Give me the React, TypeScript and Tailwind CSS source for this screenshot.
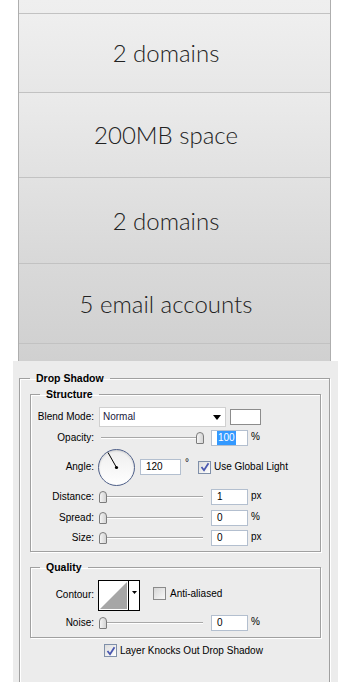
import React from "react";

const ui = { fontFamily: '"Liberation Sans", Arial, sans-serif' };
const big = { fontFamily: 'Lato, "Open Sans", sans-serif' };

function Row({ h, text, from, to, border = true }: { h: string; text?: string; from: string; to: string; border?: boolean }) {
  return (
    <div
      className={`${h} flex items-center justify-center pr-[17px] ${border ? "border-b border-[#c2c2c2]" : ""}`}
      style={{ background: `linear-gradient(${from}, ${to})` }}
    >
      {text && (
        <span className="text-[24px] font-light text-[#222222] leading-none" style={big}>
          {text}
        </span>
      )}
    </div>
  );
}

function Checkbox() {
  return (
    <div className="w-[13px] h-[13px] border border-[#7f8fa9] bg-gradient-to-br from-[#dcdcdc] to-[#ffffff] flex items-center justify-center">
      <svg width="10" height="10" viewBox="0 0 10 10">
        <path d="M1.5 5 L4 8.2 L8.5 1.2" fill="none" stroke="#4a58b0" strokeWidth="1.8" />
      </svg>
    </div>
  );
}

function EmptyCheckbox() {
  return <div className="w-[13px] h-[13px] border border-[#8a8a8a] bg-gradient-to-br from-[#d6d6d6] to-[#f8f8f8]" />;
}

function Slider({ pos }: { pos: number }) {
  return (
    <div className="relative w-[102px] h-[16px] flex items-center">
      <div className="w-full h-[2px] border-t border-[#a8a8a8] border-b border-b-white" />
      <div
        className="absolute top-[2px] w-[8px] h-[12px] rounded-t-[4px] rounded-b-[1px] border border-[#7c7c7c] bg-gradient-to-r from-[#f4f4f4] to-[#d4d4d4]"
        style={{ left: pos }}
      />
    </div>
  );
}

function Input({ value, selected }: { value: string; selected?: boolean }) {
  return (
    <div className="w-[37px] h-[16px] border border-[#b3bfcf] bg-white flex items-center pl-[5px] text-[10px] text-black leading-none">
      {selected ? <span className="bg-[#3399ff] text-white px-[1px] py-[2px]">{value}</span> : <span>{value}</span>}
    </div>
  );
}

function Label({ children }: { children: React.ReactNode }) {
  return <div className="w-[64px] text-right text-[10px] text-black leading-none pr-[1px]">{children}</div>;
}

function SliderRow({ label, value, unit, mt, selected, pos }: { label: string; value: string; unit: string; mt: string; selected?: boolean; pos: number }) {
  return (
    <div className={`flex items-center h-[16px] ${mt}`}>
      <Label>{label}</Label>
      <div className="ml-[6px]">
        <Slider pos={pos} />
      </div>
      <div className="ml-[8px]">
        <Input value={value} selected={selected} />
      </div>
      <span className="ml-[3px] text-[10px] leading-none text-black -mt-[3px]">{unit}</span>
    </div>
  );
}

const fs = "border border-[#a0a0a0] shadow-[inset_1px_1px_0_#ffffff,1px_1px_0_#ffffff]";
const lg = "text-[10.5px] font-bold leading-[14px] text-black";

export default function App() {
  return (
    <div className="w-[344px] h-[682px] bg-white overflow-hidden" style={ui}>
      <div className="ml-[18px] w-[313px] h-[361px] border-x border-[#aeaeae] flex flex-col">
        <Row h="h-[14px]" from="#efefef" to="#eeeeee" />
        <Row h="h-[79px]" text="2 domains" from="#efefef" to="#e7e7e7" />
        <Row h="h-[85px]" text="200MB space" from="#ebebeb" to="#e1e1e1" />
        <Row h="h-[86px]" text="2 domains" from="#e2e2e2" to="#d8d8d8" />
        <Row h="h-[80px]" text="5 email accounts" from="#d9d9d9" to="#d1d1d1" />
        <Row h="h-[17px]" from="#d2d2d2" to="#d0d0d0" border={false} />
      </div>
      <div className="ml-[13px] w-[325px] h-[321px] bg-[#ececec] pt-[10px]">
        <fieldset className={`ml-[6px] mr-[8px] h-[330px] ${fs}`}>
          <legend className={`ml-[10px] px-[6px] ${lg}`}>Drop Shadow</legend>
          <fieldset className={`mt-[2px] ml-[10px] mr-[8px] ${fs}`}>
            <legend className={`ml-[9px] px-[6px] ${lg}`}>Structure</legend>
            <div className="pt-[6px] pb-[5px]">
              <div className="flex items-center h-[20px]">
                <Label>Blend Mode:</Label>
                <div className="ml-[4px] w-[127px] h-[20px] bg-white border border-[#d0d0d0] flex items-center justify-between pl-[3px] pr-[4px]">
                  <span className="text-[10px] text-[#1a1a40] leading-none">Normal</span>
                  <svg width="8" height="5" viewBox="0 0 8 5">
                    <path d="M0 0 H8 L4 5 Z" fill="#000" />
                  </svg>
                </div>
                <div className="ml-[4px] w-[31px] h-[16px] bg-white border border-[#8c8c8c]" />
              </div>
              <SliderRow label="Opacity:" value="100" unit="%" mt="mt-[3px]" selected pos={95} />
              <div className="flex items-center h-[36px] mt-[3px]">
                <Label>Angle:</Label>
                <div className="ml-[3px] w-[37px] h-[37px] rounded-full border-[1.5px] border-[#4f6089] bg-gradient-to-b from-[#eeeeee] to-[#ffffff] relative shadow-[inset_0_1px_2px_rgba(0,0,0,0.15)]">
                  <svg width="34" height="34" viewBox="0 0 34 34" className="absolute left-0 top-0">
                    <line x1="17.5" y1="17.5" x2="9" y2="2.5" stroke="#000" strokeWidth="1" />
                    <circle cx="17.5" cy="17.5" r="1.6" fill="#000" />
                  </svg>
                </div>
                <div className="ml-[5px] w-[41px] h-[16px] border border-[#b3bfcf] bg-white flex items-center pl-[5px] text-[10px] leading-none">120</div>
                <span className="ml-[4px] text-[10px] leading-none -mt-[8px]">°</span>
                <div className="ml-[9px]">
                  <Checkbox />
                </div>
                <span className="ml-[3px] text-[10px] leading-none">Use Global Light</span>
              </div>
              <SliderRow label="Distance:" value="1" unit="px" mt="mt-[4px]" pos={-2} />
              <SliderRow label="Spread:" value="0" unit="%" mt="mt-[5px]" pos={-2} />
              <SliderRow label="Size:" value="0" unit="px" mt="mt-[4px]" pos={-2} />
            </div>
          </fieldset>
          <fieldset className={`mt-[8px] ml-[10px] mr-[8px] ${fs}`}>
            <legend className={`ml-[9px] px-[6px] ${lg}`}>Quality</legend>
            <div className="pt-[6px] pb-[6px]">
              <div className="flex items-center h-[30px]">
                <Label>Contour:</Label>
                <div className="ml-[3px] w-[42px] h-[31px] border border-black bg-white flex">
                  <svg width="29" height="29" viewBox="0 0 29 29">
                    <path d="M1 28 L28 1 L28 28 Z" fill="#a6a6a6" />
                  </svg>
                  <div className="w-[11px] h-full border-l border-black flex justify-center pt-[10px]">
                    <svg width="5" height="3" viewBox="0 0 5 3">
                      <path d="M0 0 H5 L2.5 3 Z" fill="#000" />
                    </svg>
                  </div>
                </div>
                <div className="ml-[13px] -mt-[3px]">
                  <EmptyCheckbox />
                </div>
                <span className="ml-[4px] -mt-[3px] text-[10px] leading-none">Anti-aliased</span>
              </div>
              <SliderRow label="Noise:" value="0" unit="%" mt="mt-[5px]" pos={-2} />
            </div>
          </fieldset>
          <div className="flex items-center mt-[6px] ml-[84px]">
            <Checkbox />
            <span className="ml-[3px] text-[10px] leading-none">Layer Knocks Out Drop Shadow</span>
          </div>
        </fieldset>
      </div>
    </div>
  );
}
